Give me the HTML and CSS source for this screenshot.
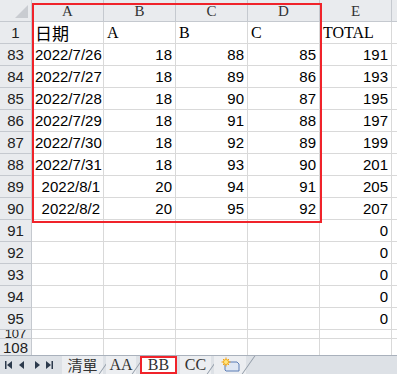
FILE: index.html
```html
<!DOCTYPE html>
<html lang="zh-Hant">
<head>
    <meta charset="UTF-8">
    <title>BB</title>
    <link rel="stylesheet" href="styles.css">
</head>
<body>

    <div class="sheet">
        <div class="grid">
            <div class="corner"><span class="tri"></span></div>
            <div class="colhead">A</div>
            <div class="colhead">B</div>
            <div class="colhead">C</div>
            <div class="colhead">D</div>
            <div class="colhead">E</div>
            <div class="colhead"></div>

            <div class="rowhead">1</div>
            <div class="cell txt cjk">日期</div>
            <div class="cell txt">A</div>
            <div class="cell txt">B</div>
            <div class="cell txt">C</div>
            <div class="cell txt">TOTAL</div>
            <div class="cell"></div>
        </div>
        <div class="grid" id="rows"></div>

        <div class="pick"></div>
    </div>

    <div class="tabbar">
        <div class="nav">
            <svg width="50" height="10" viewBox="0 0 50 10">
                <rect x="1" y="1" width="1.5" height="8" fill="#2c3a4c"/>
                <path d="M8 1 v8 l-5 -4 z" fill="#2c3a4c"/>
                <path d="M20 1 v8 l-5 -4 z" fill="#2c3a4c"/>
                <path d="M31 1 v8 l5 -4 z" fill="#2c3a4c"/>
                <path d="M42 1 v8 l5 -4 z" fill="#2c3a4c"/>
                <rect x="47.5" y="1" width="1.5" height="8" fill="#2c3a4c"/>
            </svg>
        </div>
        <div class="tab cjk w1">清單</div>
        <div class="tab w2">AA</div>
        <div class="tab on w3">BB</div>
        <div class="tab w4">CC</div>
        <div class="tab newtab">
            <svg width="22" height="16" viewBox="0 0 22 16">
                <path d="M6 5 h12 l2 2 v7 h-13 l-1 -1 z" fill="#dfe7f3" stroke="#5b7db5" stroke-width="1"/>
                <circle cx="7" cy="5" r="3" fill="#f7c236"/>
                <path d="M7 0.5 v9 M2.5 5 h9 M4 2 l6 6 M10 2 l-6 6" stroke="#f29f19" stroke-width="1"/>
                <circle cx="7" cy="5" r="2" fill="#ffe680"/>
            </svg>
        </div>
    </div>

    <script>
        var data = [
            [83, '2022/7/26', 18, 88, 85, 191],
            [84, '2022/7/27', 18, 89, 86, 193],
            [85, '2022/7/28', 18, 90, 87, 195],
            [86, '2022/7/29', 18, 91, 88, 197],
            [87, '2022/7/30', 18, 92, 89, 199],
            [88, '2022/7/31', 18, 93, 90, 201],
            [89, '2022/8/1', 20, 94, 91, 205],
            [90, '2022/8/2', 20, 95, 92, 207],
            [91, '', '', '', '', 0],
            [92, '', '', '', '', 0],
            [93, '', '', '', '', 0],
            [94, '', '', '', '', 0],
            [95, '', '', '', '', 0],
            [107, '', '', '', '', ''],
            [108, '', '', '', '', '']
        ];

        var rows = document.getElementById('rows');
        for(var i=0; i<data.length; i++){
            var r = data[i];
            var cls = r[0] === 107 ? ' short' : (r[0] === 108 ? ' last' : '');
            var h = document.createElement('div');
            h.className = 'rowhead' + cls;
            h.textContent = r[0];
            rows.appendChild(h);
            for(var j=1; j<=6; j++){
                var c = document.createElement('div');
                c.className = 'cell num' + cls;
                if(j < 6) c.textContent = r[j];
                rows.appendChild(c);
            }
        }
    </script>

</body>
</html>
```

FILE: styles.css
```css
body{
    margin: 0;
    width: 397px;
    height: 374px;
    overflow: hidden;
    background: #fff;
    font-family: "Liberation Sans", "Noto Sans CJK TC", sans-serif;
}
.cjk{
    font-family: "Noto Sans CJK TC", sans-serif;
}
.sheet{
    position: relative;
    height: 355px;
    overflow: hidden;
}
.grid{
    display: grid;
    grid-template-columns: 32px 72px 72px 72px 72px 72px 40px;
    grid-auto-rows: 22px;
}
.corner,
.colhead,
.rowhead{
    background: #e9ebee;
    color: #333;
    border-right: 1px solid #c5c9cf;
    border-bottom: 1px solid #c5c9cf;
    box-sizing: border-box;
}
.corner{
    position: relative;
}
.corner .tri{
    position: absolute;
    right: 3px;
    bottom: 3px;
    width: 0;
    height: 0;
    border-left: 13px solid transparent;
    border-bottom: 13px solid #c9ccd1;
}
.colhead{
    text-align: center;
    font-family: "Liberation Serif", serif;
    font-size: 15px;
    line-height: 22px;
}
.rowhead{
    text-align: center;
    font-size: 15px;
    line-height: 22px;
    color: #222;
}
.cell{
    border-right: 1px solid #d9d9d9;
    border-bottom: 1px solid #d9d9d9;
    box-sizing: border-box;
    font-size: 15px;
    line-height: 22px;
    color: #000;
    padding: 0 3px;
    white-space: nowrap;
}
.cell.txt{
    font-family: "Liberation Serif", "Noto Sans CJK TC", serif;
    font-size: 16px;
    text-align: left;
}
.cell.txt.cjk{
    font-family: "Noto Sans CJK TC", sans-serif;
    font-size: 17px;
    line-height: 21px;
}
.cell.num{
    text-align: right;
}
.short{
    line-height: 8px;
    font-size: 13px;
    overflow: hidden;
}
.last{
    line-height: 17px;
}
#rows{
    grid-template-rows: repeat(13, 22px) 9px 17px;
}
.pick{
    position: absolute;
    left: 32px;
    top: 3px;
    width: 290px;
    height: 220px;
    border: 2px solid #f0232a;
    box-sizing: border-box;
    pointer-events: none;
}

.tabbar{
    height: 18px;
    background: #dde1e6;
    border-top: 1px solid #a9b1bc;
    display: flex;
    align-items: stretch;
}
.nav{
    width: 62px;
    display: flex;
    align-items: center;
    padding-left: 4px;
    box-sizing: border-box;
}
.tab{
    position: relative;
    box-sizing: border-box;
    text-align: center;
    margin-right: 3px;
    font-family: "Liberation Serif", serif;
    font-size: 16px;
    line-height: 18px;
    color: #333;
    background: #eceef1;
}
.tab::after{
    content: "";
    position: absolute;
    right: -3px;
    top: 0;
    width: 1px;
    height: 100%;
    background: #8f99a6;
    transform: skewX(-35deg);
}
.tab.cjk{
    font-family: "Noto Sans CJK TC", sans-serif;
    font-size: 15px;
}
.w1{ width: 41px; }
.w2{ width: 30px; }
.w3{ width: 37px; }
.w4{ width: 31px; }
.tab.on{
    background: #fff;
    outline: 2px solid #f0232a;
    outline-offset: -2px;
    margin-left: 1px;
}
.tab.on::after{
    display: none;
}
.newtab{
    width: 32px;
    padding-top: 1px;
    line-height: 0;
}
```
